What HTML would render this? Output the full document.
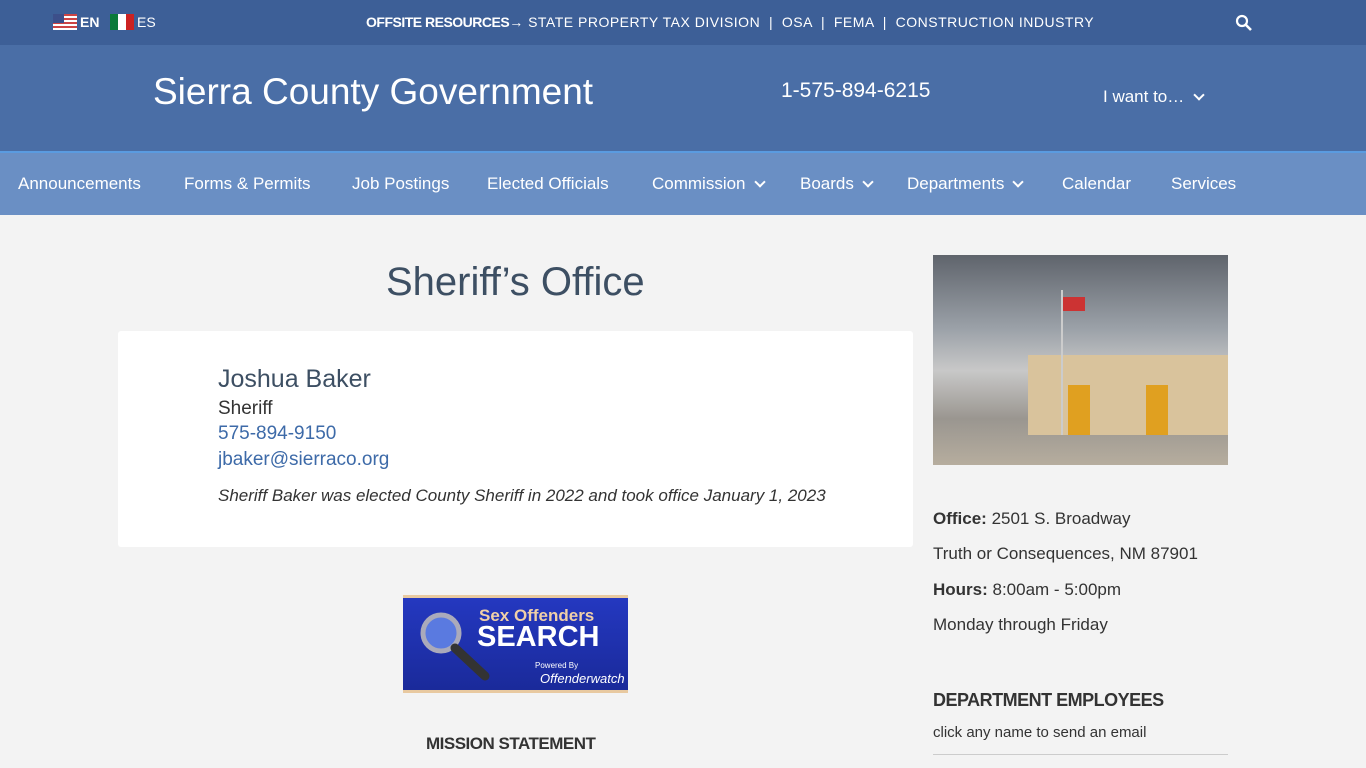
<!DOCTYPE html>
<html><head><style>
*{margin:0;padding:0;box-sizing:border-box}
body{width:1366px;height:768px;overflow:hidden;background:#f3f3f3;font-family:"Liberation Sans",sans-serif;color:#333;position:relative}
.a{position:absolute;white-space:nowrap}
#top{position:absolute;left:0;top:0;width:1366px;height:45px;background:#3d5f97;color:#fff;font-size:14px}
#hdr{position:absolute;left:0;top:45px;width:1366px;height:106px;background:#4a6ea6;color:#fff}
#nav{position:absolute;left:0;top:151px;width:1366px;height:64px;background:#6a8fc4;border-top:2px solid #5a9be0;color:#fff;font-size:17px}
.chev{display:inline-block;width:8px;height:8px;border-right:2px solid #fff;border-bottom:2px solid #fff;transform:rotate(45deg);margin-left:10px;position:relative;top:-3px}
</style></head><body>
<div id="top">
 <div class="a" style="left:53px;top:14px;width:24px;height:16px;background:repeating-linear-gradient(#c44 0 2px,#fff 2px 4px)"><div style="width:11px;height:9px;background:#3c4f8a"></div></div>
 <div class="a" style="left:80px;top:14px;font-weight:bold">EN</div>
 <div class="a" style="left:110px;top:14px;width:24px;height:16px;background:linear-gradient(90deg,#0a7a3a 0 8px,#fff 8px 16px,#c22 16px)"></div>
 <div class="a" style="left:137px;top:14px">ES</div>
 <div class="a" style="left:366px;top:14px;letter-spacing:0.5px"><b style="letter-spacing:-0.5px">OFFSITE RESOURCES</b>→ STATE PROPERTY TAX DIVISION &nbsp;| &nbsp;OSA &nbsp;| &nbsp;FEMA &nbsp;| &nbsp;CONSTRUCTION INDUSTRY</div>
 <svg class="a" style="left:1235px;top:14px" width="18" height="18"><circle cx="7" cy="7" r="5" stroke="#fff" stroke-width="2.2" fill="none"/><line x1="11" y1="11" x2="16" y2="16" stroke="#fff" stroke-width="2.6"/></svg>
</div>
<div id="hdr">
 <div class="a" style="left:153px;top:26px;font-size:37px">Sierra County Government</div>
 <div class="a" style="left:781px;top:34px;font-size:21px">1-575-894-6215</div>
 <div class="a" style="left:1103px;top:42px;font-size:17px">I want to… <span class="chev" style="margin-left:6px"></span></div>
</div>
<div id="nav">
 <div class="a" style="left:18px;top:21px">Announcements</div>
 <div class="a" style="left:184px;top:21px">Forms &amp; Permits</div>
 <div class="a" style="left:352px;top:21px">Job Postings</div>
 <div class="a" style="left:487px;top:21px">Elected Officials</div>
 <div class="a" style="left:652px;top:21px">Commission<span class="chev"></span></div>
 <div class="a" style="left:800px;top:21px">Boards<span class="chev"></span></div>
 <div class="a" style="left:907px;top:21px">Departments<span class="chev"></span></div>
 <div class="a" style="left:1062px;top:21px">Calendar</div>
 <div class="a" style="left:1171px;top:21px">Services</div>
</div>
<div class="a" style="left:386px;top:260px;font-size:40px;color:#3d4f63">Sheriff’s Office</div>
<div class="a" style="left:118px;top:331px;width:795px;height:216px;background:#fff;border-radius:3px"></div>
<div class="a" style="left:218px;top:365px;font-size:25px;color:#3d4f63">Joshua Baker</div>
<div class="a" style="left:218px;top:398px;font-size:19px;color:#333">Sheriff</div>
<div class="a" style="left:218px;top:423px;font-size:19px;color:#3d6aa8">575-894-9150</div>
<div class="a" style="left:218px;top:449px;font-size:19px;color:#3d6aa8">jbaker@sierraco.org</div>
<div class="a" style="left:218px;top:486px;font-size:17px;font-style:italic;color:#333">Sheriff Baker was elected County Sheriff in 2022 and took office January 1, 2023</div>
<div class="a" style="left:403px;top:595px;width:225px;height:98px;background:linear-gradient(#2438c0,#1a2a9a);border-top:3px solid #e8c9a0;border-bottom:3px solid #e8c9a0">
 <svg class="a" style="left:14px;top:10px" width="80" height="75"><circle cx="24" cy="25" r="18" fill="#5a7ae0" stroke="#aab" stroke-width="5"/><line x1="38" y1="40" x2="68" y2="68" stroke="#333" stroke-width="9" stroke-linecap="round"/></svg>
 <div class="a" style="left:76px;top:8px;font-size:17px;font-weight:bold;color:#f0d0a8">Sex Offenders</div>
 <div class="a" style="left:74px;top:23px;font-size:29px;font-weight:bold;color:#fff">SEARCH</div>
 <div class="a" style="left:132px;top:63px;font-size:8px;color:#fff">Powered By</div>
 <div class="a" style="left:137px;top:73px;font-size:13px;font-style:italic;color:#fff">Offenderwatch</div>
</div>
<div class="a" style="left:426px;top:734px;font-size:17px;font-weight:bold;color:#333;letter-spacing:-0.5px">MISSION STATEMENT</div>
<div class="a" style="left:933px;top:255px;width:295px;height:210px;background:linear-gradient(#5f646c 0%,#9ba1a8 35%,#c8c8c8 55%,#9a9690 78%,#b6ad9e 100%)">
 <div class="a" style="left:95px;top:100px;width:200px;height:80px;background:#d9c39c"></div>
 <div class="a" style="left:135px;top:130px;width:22px;height:50px;background:#e0a020"></div>
 <div class="a" style="left:213px;top:130px;width:22px;height:50px;background:#e0a020"></div>
 <div class="a" style="left:128px;top:35px;width:2px;height:145px;background:#ccc"></div>
 <div class="a" style="left:130px;top:42px;width:22px;height:14px;background:#c33"></div>
</div>
<div class="a" style="left:933px;top:509px;font-size:17px;color:#333"><b>Office:</b> 2501 S. Broadway</div>
<div class="a" style="left:933px;top:544px;font-size:17px;color:#333">Truth or Consequences, NM 87901</div>
<div class="a" style="left:933px;top:580px;font-size:17px;color:#333"><b>Hours:</b> 8:00am - 5:00pm</div>
<div class="a" style="left:933px;top:615px;font-size:17px;color:#333">Monday through Friday</div>
<div class="a" style="left:933px;top:690px;font-size:18px;font-weight:bold;color:#333;letter-spacing:-0.5px">DEPARTMENT EMPLOYEES</div>
<div class="a" style="left:933px;top:724px;font-size:15px;color:#333">click any name to send an email</div>
<div class="a" style="left:933px;top:754px;width:295px;height:1px;background:#ccc"></div>
</body></html>
